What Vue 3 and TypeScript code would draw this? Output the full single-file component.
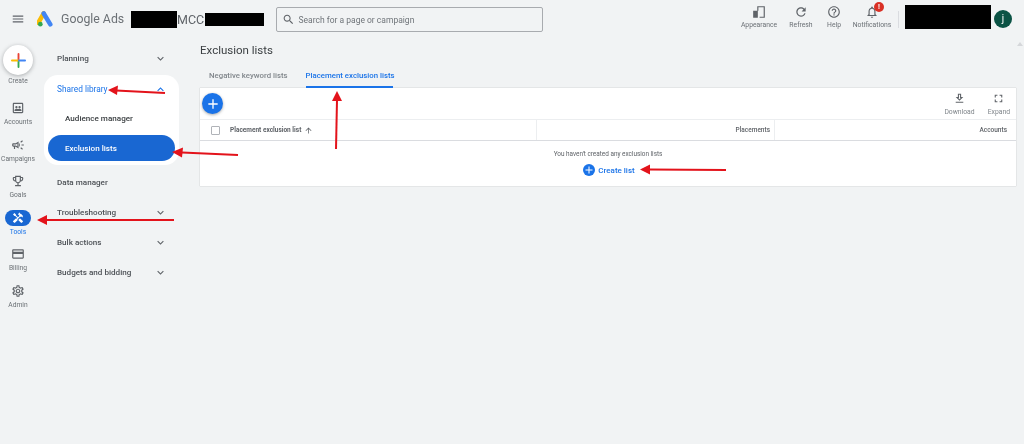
<script setup lang="ts">
const P = {
  menu: 'M3 18h18v-2H3v2zm0-5h18v-2H3v2zm0-7v2h18V6H3z',
  search: 'M15.5 14h-.79l-.28-.27C15.41 12.59 16 11.11 16 9.5 16 5.91 13.09 3 9.5 3S3 5.91 3 9.5 5.91 16 9.5 16c1.61 0 3.09-.59 4.23-1.57l.27.28v.79l5 4.99L20.49 19l-4.99-5zm-6 0C7.01 14 5 11.99 5 9.5S7.01 5 9.5 5 14 7.01 14 9.5 11.99 14 9.5 14z',
  refresh: 'M17.65 6.35C16.2 4.9 14.21 4 12 4c-4.42 0-7.99 3.58-7.99 8s3.57 8 7.99 8c3.73 0 6.84-2.55 7.73-6h-2.08c-.82 2.33-3.04 4-5.65 4-3.31 0-6-2.69-6-6s2.69-6 6-6c1.66 0 3.14.69 4.22 1.78L13 11h7V4l-2.35 2.35z',
  help: 'M11 18h2v-2h-2v2zm1-16C6.48 2 2 6.48 2 12s4.48 10 10 10 10-4.48 10-10S17.52 2 12 2zm0 18c-4.41 0-8-3.59-8-8s3.59-8 8-8 8 3.59 8 8-3.59 8-8 8zm0-14c-2.21 0-4 1.79-4 4h2c0-1.1.9-2 2-2s2 .9 2 2c0 2-3 1.75-3 5h2c0-2.25 3-2.5 3-5 0-2.21-1.79-4-4-4z',
  bell: 'M12 22c1.1 0 2-.9 2-2h-4c0 1.1.9 2 2 2zm6-6v-5c0-3.07-1.63-5.64-4.5-6.32V4c0-.83-.67-1.5-1.5-1.5s-1.5.67-1.5 1.5v.68C7.64 5.36 6 7.92 6 11v5l-2 2v1h16v-1l-2-2zm-2 1H8v-6c0-2.48 1.51-4.5 4-4.5s4 2.02 4 4.5v6z',
  appearance: 'M2 10h8v12H2V10zM9 2h13v20h-9v-2h7V4h-9v6H9V2z',
  down: 'M16.59 8.59L12 13.17 7.41 8.59 6 10l6 6 6-6z',
  up: 'M12 8l-6 6 1.41 1.41L12 10.83l4.59 4.58L18 14z',
  add: 'M19 13h-6v6h-2v-6H5v-2h6V5h2v6h6v2z',
  download: 'M19 9h-4V3H9v6H5l7 7 7-7zm-8 2V5h2v6h1.17L12 13.17 9.83 11H11zm-6 7h14v2H5z',
  expand: 'M7 14H5v5h5v-2H7v-3zm-2-4h2V7h3V5H5v5zm12 7h-3v2h5v-5h-2v3zM14 5v2h3v3h2V5h-5z',
  sort: 'M4 12l1.41 1.41L11 7.83V20h2V7.83l5.58 5.59L20 12l-8-8-8 8z',
  accounts: 'M19 3H5c-1.1 0-2 .9-2 2v14c0 1.1.9 2 2 2h14c1.1 0 2-.9 2-2V5c0-1.1-.9-2-2-2zm0 16H5V5h14v14zM6 17h12v-1.2c0-1.6-2.2-2.5-3.3-2.5-.5 0-1.3.2-1.9.5h-1.6c-.6-.3-1.4-.5-1.9-.5-1.100 0-3.300.9-3.300 2.500V17zM9.300 12.500a2 2 0 1 0 0-4 2 2 0 0 0 0 4zm5.400 0a2 2 0 1 0 0-4 2 2 0 0 0 0 4z',
  campaigns: 'M18 11v2h4v-2h-4zm-2 6.61c.96.71 2.21 1.65 3.2 2.39.4-.53.8-1.07 1.2-1.6-.99-.74-2.24-1.68-3.2-2.4-.4.54-.8 1.08-1.2 1.61zM20.4 5.6c-.4-.53-.8-1.07-1.2-1.6-.99.74-2.24 1.68-3.2 2.4.4.53.8 1.07 1.2 1.6.96-.72 2.21-1.65 3.2-2.4zM4 9c-1.1 0-2 .9-2 2v2c0 1.1.9 2 2 2h1v4h2v-4h1l5 3V6L8 9H4zm5.03 1.71L11 9.53v4.94l-1.97-1.18-.48-.29H4v-2h4.55l.48-.29zM15.5 12c0-1.33-.58-2.53-1.5-3.35v6.69c.92-.81 1.5-2.01 1.5-3.34z',
  goals: 'M19 5h-2V3H7v2H5c-1.1 0-2 .9-2 2v1c0 2.55 1.92 4.63 4.39 4.94.63 1.5 1.98 2.63 3.61 2.96V19H7v2h10v-2h-4v-3.1c1.63-.33 2.98-1.46 3.61-2.96C19.08 12.63 21 10.55 21 8V7c0-1.1-.9-2-2-2zM5 8V7h2v3.82C5.84 10.4 5 9.3 5 8zm7 6c-1.65 0-3-1.35-3-3V5h6v6c0 1.65-1.35 3-3 3zm7-6c0 1.3-.84 2.4-2 2.82V7h2v1z',
  tools: 'M21.67 18.17l-5.3-5.3h-.99l-2.54 2.54v.99l5.3 5.3c.39.39 1.02.39 1.41 0l2.12-2.12c.39-.38.39-1.02 0-1.41zM17.34 10.19l1.41-1.41 2.12 2.12c1.17-1.17 1.17-3.07 0-4.24l-3.54-3.54-1.41 1.41V1.71l-.7-.71-3.54 3.54.71.71h2.83l-1.41 1.41 1.06 1.06-2.89 2.89-4.13-4.13V5.06L4.83 2.04 2 4.87 5.03 7.9h1.41l4.13 4.13-.85.85H7.6l-5.3 5.3c-.39.39-.39 1.02 0 1.41l2.12 2.12c.39.39 1.02.39 1.41 0l5.3-5.3v-2.12l5.15-5.15 1.06 1.05z',
  billing: 'M20 4H4c-1.11 0-1.99.89-1.99 2L2 18c0 1.11.89 2 2 2h16c1.11 0 2-.89 2-2V6c0-1.11-.89-2-2-2zm0 14H4v-6h16v6zm0-10H4V6h16v2z',
  admin: 'M19.43 12.98c.04-.32.07-.64.07-.98 0-.34-.03-.66-.07-.98l2.11-1.65c.19-.15.24-.42.12-.64l-2-3.46c-.09-.16-.26-.25-.44-.25-.06 0-.12.01-.17.03l-2.49 1c-.52-.4-1.08-.73-1.69-.98l-.38-2.65C14.46 2.18 14.25 2 14 2h-4c-.25 0-.46.18-.49.42l-.38 2.65c-.61.25-1.17.59-1.69.98l-2.49-1c-.06-.02-.12-.03-.18-.03-.17 0-.34.09-.43.25l-2 3.46c-.13.22-.07.49.12.64l2.11 1.65c-.04.32-.07.65-.07.98 0 .33.03.66.07.98l-2.11 1.65c-.19.15-.24.42-.12.64l2 3.46c.09.16.26.25.44.25.06 0 .12-.01.17-.03l2.49-1c.52.4 1.08.73 1.69.98l.38 2.65c.03.24.24.42.49.42h4c.25 0 .46-.18.49-.42l.38-2.65c.61-.25 1.17-.59 1.69-.98l2.49 1c.06.02.12.03.18.03.17 0 .34-.09.43-.25l2-3.46c.12-.22.07-.49-.12-.64l-2.11-1.65zm-1.98-1.71c.04.31.05.52.05.73 0 .21-.02.43-.05.73l-.14 1.13.89.7 1.08.84-.7 1.21-1.27-.51-1.04-.42-.9.68c-.43.32-.84.56-1.25.73l-1.06.43-.16 1.13-.2 1.35h-1.4l-.19-1.35-.16-1.13-1.06-.43c-.43-.18-.83-.41-1.23-.71l-.91-.7-1.06.43-1.27.51-.7-1.21 1.08-.84.89-.7-.14-1.13c-.03-.31-.05-.54-.05-.74s.02-.43.05-.73l.14-1.13-.89-.7-1.08-.84.7-1.21 1.27.51 1.04.42.9-.68c.43-.32.84-.56 1.25-.73l1.06-.43.16-1.13.2-1.35h1.39l.19 1.35.16 1.13 1.06.43c.43.18.83.41 1.23.71l.91.7 1.06-.43 1.27-.51.7 1.21-1.07.85-.89.7.14 1.13zM12 8c-2.21 0-4 1.79-4 4s1.79 4 4 4 4-1.79 4-4-1.79-4-4-4zm0 6c-1.1 0-2-.9-2-2s.9-2 2-2 2 .9 2 2-.9 2-2 2z'
}

const topActions = [
  { label: 'Appearance', icon: P.appearance, w: 42 },
  { label: 'Refresh', icon: P.refresh, w: 42 },
  { label: 'Help', icon: P.help, w: 24 },
  { label: 'Notifications', icon: P.bell, w: 52, badge: true }
]

const rail = [
  { label: 'Accounts', icon: P.accounts },
  { label: 'Campaigns', icon: P.campaigns },
  { label: 'Goals', icon: P.goals },
  { label: 'Tools', icon: P.tools, active: true },
  { label: 'Billing', icon: P.billing },
  { label: 'Admin', icon: P.admin }
]

const arrows = [
  { x1: 165, y1: 93, x2: 116, y2: 90.5, head: '108,90 118,85.500 117,95' },
  { x1: 238, y1: 155, x2: 182, y2: 152.5, head: '172,152 183,147.500 182,157.500' },
  { x1: 174, y1: 220, x2: 46, y2: 220, head: '37,220 47,215 47,225' },
  { x1: 336, y1: 149, x2: 337, y2: 100, head: '337,91 332,101 342,101' },
  { x1: 726, y1: 170, x2: 649, y2: 169.500, head: '640,169.500 650,164.500 650,174.500' }
]
</script>

<template>
  <div class="page">
    <header class="topbar">
      <div class="brand">
        <svg class="ico menu" viewBox="0 0 24 24"><path :d="P.menu" /></svg>
        <svg class="logo" viewBox="0 0 24 24">
          <path d="M9.500 3.500 2 16.500" stroke="#fbbc04" stroke-width="6.400" stroke-linecap="round" fill="none" />
          <path d="M9.500 3.500 18.800 18.800" stroke="#4285f4" stroke-width="6.400" stroke-linecap="round" fill="none" />
          <circle cx="4.700" cy="18.600" r="3.300" fill="#34a853" />
        </svg>
        <span class="wordmark">Google Ads</span>
        <span class="redact r1"></span>
        <span class="mcc">MCC</span>
        <span class="redact r2"></span>
      </div>
      <div class="search">
        <svg class="ico search-ico" viewBox="0 0 24 24"><path :d="P.search" /></svg>
        <span>Search for a page or campaign</span>
      </div>
      <div class="actions">
        <div v-for="a in topActions" :key="a.label" class="action" :style="{ width: a.w + 'px' }">
          <span class="action-icon">
            <svg class="ico" viewBox="0 0 24 24"><path :d="a.icon" /></svg>
            <span v-if="a.badge" class="badge">!</span>
          </span>
          <span>{{ a.label }}</span>
        </div>
        <span class="divider"></span>
        <span class="redact r3"></span>
        <span class="avatar">j</span>
      </div>
    </header>

    <div class="below">
      <nav class="rail">
        <div class="create">
          <span class="create-btn">
            <svg viewBox="0 0 16 16" width="15" height="15">
              <path d="M8 1v6.500" stroke="#ea4335" stroke-width="2" stroke-linecap="round" />
              <path d="M8 8.500V15" stroke="#34a853" stroke-width="2" stroke-linecap="round" />
              <path d="M1 8h6.500" stroke="#fbbc04" stroke-width="2" stroke-linecap="round" />
              <path d="M8.500 8H15" stroke="#4285f4" stroke-width="2" stroke-linecap="round" />
            </svg>
          </span>
          <span>Create</span>
        </div>
        <div v-for="r in rail" :key="r.label" class="rail-item" :class="{ active: r.active }">
          <span class="rail-icon">
            <svg class="ico" viewBox="0 0 24 24"><path :d="r.icon" /></svg>
          </span>
          <span>{{ r.label }}</span>
        </div>
      </nav>

      <aside class="side">
        <div class="side-row">
          <span>Planning</span>
          <svg class="chev" viewBox="0 0 24 24"><path :d="P.down" /></svg>
        </div>
        <div class="side-card">
          <div class="side-row open">
            <span>Shared library</span>
            <svg class="chev" viewBox="0 0 24 24"><path :d="P.up" /></svg>
          </div>
          <div class="side-sub">Audience manager</div>
          <div class="side-sub selected">Exclusion lists</div>
        </div>
        <div class="side-row"><span>Data manager</span></div>
        <div class="side-row">
          <span>Troubleshooting</span>
          <svg class="chev" viewBox="0 0 24 24"><path :d="P.down" /></svg>
        </div>
        <div class="side-row">
          <span>Bulk actions</span>
          <svg class="chev" viewBox="0 0 24 24"><path :d="P.down" /></svg>
        </div>
        <div class="side-row">
          <span>Budgets and bidding</span>
          <svg class="chev" viewBox="0 0 24 24"><path :d="P.down" /></svg>
        </div>
      </aside>

      <main class="main">
        <h1>Exclusion lists</h1>
        <div class="tabs">
          <span class="tab">Negative keyword lists</span>
          <span class="tab current">Placement exclusion lists</span>
        </div>
        <section class="card">
          <div class="toolbar">
            <span class="fab">
              <svg viewBox="0 0 24 24" width="16" height="16"><path :d="P.add" fill="#fff" /></svg>
            </span>
            <div class="tools">
              <div class="tool">
                <svg class="ico" viewBox="0 0 24 24"><path :d="P.download" /></svg>
                <span>Download</span>
              </div>
              <div class="tool">
                <svg class="ico" viewBox="0 0 24 24"><path :d="P.expand" /></svg>
                <span>Expand</span>
              </div>
            </div>
          </div>
          <div class="thead">
            <div class="th first">
              <span class="check"></span>
              <span>Placement exclusion list</span>
              <svg class="sort" viewBox="0 0 24 24"><path :d="P.sort" /></svg>
            </div>
            <div class="th num col2">Placements</div>
            <div class="th num col3">Accounts</div>
          </div>
          <div class="empty">
            <p>You haven't created any exclusion lists</p>
            <div class="create-list">
              <svg viewBox="0 0 24 24" width="12" height="12">
                <circle cx="12" cy="12" r="12" fill="#1a73e8" />
                <path d="M19 13h-6v6h-2v-6H5v-2h6V5h2v6h6v2z" fill="#fff" />
              </svg>
              <span>Create list</span>
            </div>
          </div>
        </section>
      </main>
    </div>

    <span class="scroll-up"></span>

    <svg class="annot" viewBox="0 0 1024 444" width="1024" height="444">
      <g v-for="(a, i) in arrows" :key="i">
        <line :x1="a.x1" :y1="a.y1" :x2="a.x2" :y2="a.y2" stroke="#e3131b" stroke-width="2" />
        <polygon :points="a.head" fill="#e3131b" />
      </g>
    </svg>
  </div>
</template>

<style scoped>
.page {
  position: relative;
  width: 1024px;
  height: 444px;
  overflow: hidden;
  background: #f1f3f4;
  color: #3c4043;
  font-family: Roboto, "Liberation Sans", sans-serif;
  filter: blur(0.3px);
}
.ico { width: 14px; height: 14px; fill: #5f6368; display: block; }

.topbar { display: flex; align-items: flex-start; height: 38px; }
.brand { display: flex; align-items: center; height: 38px; width: 276px; flex: none; }
.menu { margin-left: 11px; width: 14px; height: 14px; }
.logo { width: 17px; height: 17px; margin-left: 12px; }
.wordmark { margin-left: 7px; font-size: 12.300px; color: #6b7075; width: 70px; white-space: nowrap; }
.redact { background: #000; display: block; flex: none; }
.r1 { width: 46px; height: 17px; }
.mcc { font-size: 12.500px; color: #5f6368; width: 28px; }
.r2 { width: 59px; height: 13px; }
.search {
  box-sizing: border-box;
  margin-top: 7px;
  width: 267px;
  height: 25px;
  border: 1px solid #a8abaf;
  border-radius: 2px;
  display: flex;
  align-items: center;
  gap: 3.500px;
  padding-left: 5px;
  font-size: 8.500px;
  color: #70757a;
}
.search-ico { width: 13px; height: 13px; }
.actions { margin-left: auto; display: flex; align-items: flex-start; padding-top: 5px; }
.action {
  display: flex;
  flex-direction: column;
  align-items: center;
  font-size: 6.800px;
  color: #6b7075;
  gap: 2px;
  white-space: nowrap;
}
.action-icon { position: relative; display: block; }
.badge {
  position: absolute;
  left: 9px;
  top: -3px;
  width: 10px;
  height: 10px;
  border-radius: 50%;
  background: #d93025;
  color: #fff;
  font-size: 7px;
  font-weight: 700;
  line-height: 10px;
  text-align: center;
}
.divider { width: 1px; height: 17px; background: #dadce0; margin: 6px 6px 0 0; }
.r3 { width: 86px; height: 24px; }
.avatar {
  width: 18px;
  height: 18px;
  border-radius: 50%;
  background: #0b5345;
  color: #fff;
  font-size: 10px;
  line-height: 18px;
  text-align: center;
  margin: 5px 12px 0 3px;
}

.below { display: flex; align-items: flex-start; }
.rail { width: 36px; flex: none; display: flex; flex-direction: column; align-items: center; }
.create {
  display: flex;
  flex-direction: column;
  align-items: center;
  font-size: 6.700px;
  color: #6b7075;
  margin-top: 7px;
  gap: 2px;
  margin-bottom: 15px;
}
.create-btn {
  width: 30px;
  height: 30px;
  border-radius: 50%;
  background: #fff;
  box-shadow: 0 1px 4px rgba(60, 64, 67, 0.4);
  display: flex;
  align-items: center;
  justify-content: center;
}
.rail-item {
  height: 36.500px;
  display: flex;
  flex-direction: column;
  align-items: center;
  font-size: 6.700px;
  color: #6b7075;
  white-space: nowrap;
  gap: 2px;
}
.rail-icon { width: 26px; height: 16px; border-radius: 8px; display: flex; align-items: center; justify-content: center; }
.rail-item.active { color: #1a73e8; }
.rail-item.active .rail-icon { background: #1967d2; }
.rail-item.active .ico { fill: #fff; width: 12px; height: 12px; }

.side { width: 135px; margin-left: 8px; flex: none; padding-top: 5px; }
.side-row {
  height: 30px;
  display: flex;
  align-items: center;
  justify-content: space-between;
  padding: 0 12px 0 13px;
  font-size: 8.100px;
  font-weight: 500;
  color: #4d5156;
}
.chev { width: 13px; height: 13px; fill: #5f6368; }
.side-card { background: #fff; border-radius: 14px; height: 90px; margin: 2px 0; }
.side-row.open { color: #1a73e8; height: 28px; font-weight: 400; font-size: 8.300px; }
.side-row.open .chev { fill: #1a73e8; }
.side-sub {
  height: 30px;
  display: flex;
  align-items: center;
  padding-left: 21px;
  font-size: 8.100px;
  font-weight: 500;
  color: #3c4043;
}
.side-sub.selected {
  height: 26px;
  margin: 2px 4px 0;
  padding-left: 17px;
  border-radius: 13px;
  background: #1967d2;
  color: #fff;
}

.main { margin-left: 21px; width: 816px; flex: none; }
h1 { margin: 5px 0 0; font-size: 11.500px; font-weight: 400; line-height: 15px; color: #3c4043; }
.tabs { display: flex; margin-top: 10px; height: 20px; padding-left: 9px; gap: 18px; }
.tab { font-size: 7.800px; font-weight: 500; color: #80868b; height: 20px; line-height: 15px; box-sizing: border-box; white-space: nowrap; }
.tab.current { color: #1a73e8; border-bottom: 2px solid #1a73e8; width: 87px; }
.card { background: #fff; box-shadow: 0 0 1px rgba(60, 64, 67, 0.4); }
.toolbar { height: 31px; display: flex; justify-content: space-between; padding-left: 2px; box-sizing: border-box; }
.fab {
  margin-top: 5px;
  width: 21px;
  height: 21px;
  border-radius: 50%;
  background: #1a73e8;
  box-shadow: 0 1px 3px rgba(60, 64, 67, 0.45);
  display: flex;
  align-items: center;
  justify-content: center;
}
.tools { display: flex; gap: 13px; padding: 4px 6px 0 0; }
.tool { display: flex; flex-direction: column; align-items: center; font-size: 6.800px; color: #80868b; gap: 3px; }
.tool .ico { width: 13px; height: 13px; }
.thead {
  display: flex;
  height: 22px;
  border-top: 1px solid #eceef0;
  border-bottom: 1px solid #dadce0;
  box-sizing: border-box;
  font-size: 6.500px;
  font-weight: 700;
  color: #5f6368;
}
.th { display: flex; align-items: center; box-sizing: border-box; height: 100%; }
.first { width: 336px; padding-left: 11px; gap: 4px; }
.num { justify-content: flex-end; border-left: 1px solid #eceef0; padding-right: 4px; font-weight: 500; }
.col2 { width: 238px; }
.col3 { width: 242px; padding-right: 9px; }
.check { width: 7px; height: 7px; border: 1px solid #b0b3b8; border-radius: 1px; margin-right: 6px; flex: none; }
.sort { width: 9px; height: 9px; fill: #5f6368; margin-left: -1px; }
.empty { height: 45px; display: flex; flex-direction: column; align-items: center; }
.empty p { margin: 9px 0 0; font-size: 6.400px; color: #5f6368; line-height: 9px; }
.create-list { display: flex; align-items: center; gap: 3px; margin-top: 5px; padding-left: 2px; font-size: 8px; font-weight: 500; color: #1a73e8; }
.scroll-up {
  position: absolute;
  right: 1px;
  top: 42px;
  width: 0;
  height: 0;
  border-left: 3px solid transparent;
  border-right: 3px solid transparent;
  border-bottom: 4px solid #d5d7da;
}
.annot { position: absolute; left: 0; top: 0; pointer-events: none; }
</style>
